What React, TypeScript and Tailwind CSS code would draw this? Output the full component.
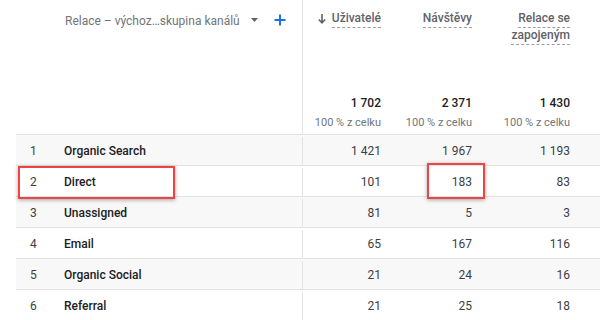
const rows = [
  { n: 1, name: "Organic Search", a: "1 421", b: "1 967", c: "1 193" },
  { n: 2, name: "Direct", a: "101", b: "183", c: "83" },
  { n: 3, name: "Unassigned", a: "81", b: "5", c: "3" },
  { n: 4, name: "Email", a: "65", b: "167", c: "116" },
  { n: 5, name: "Organic Social", a: "21", b: "24", c: "16" },
  { n: 6, name: "Referral", a: "21", b: "25", c: "18" },
];

function HeaderLabel({ children }: { children: React.ReactNode }) {
  return (
    <span className="border-b border-dashed border-[#9aa0a6] pb-[1px] leading-[16px]">
      {children}
    </span>
  );
}

export default function App() {
  return (
    <div
      className="relative h-[320px] w-[600px] overflow-hidden bg-white text-[12px] text-[#3c4043]"
      style={{ fontFamily: "Roboto, 'Liberation Sans', sans-serif" }}
    >
      <div className="ml-[16px]">
        {/* Header */}
        <div className="flex h-[135px] border-b border-[#e3e3e3]">
          <div className="flex w-[287px] items-start border-r border-[#e3e3e3] pt-[12px] pl-[49px]">
            <span className="text-[12px] text-[#70757a]">Relace – výchoz…skupina kanálů</span>
            <svg className="ml-[11px] mt-[6px]" width="7" height="4" viewBox="0 0 7 4">
              <path d="M0 0h7L3.5 4z" fill="#5f6368" />
            </svg>
            <svg className="ml-[16px] mt-[2px]" width="12" height="12" viewBox="0 0 12 12">
              <path d="M6 0.5v11M0.5 6h11" stroke="#1a73e8" strokeWidth="2" />
            </svg>
          </div>
          <div className="flex flex-col">
            <div className="flex h-[94px] items-start pt-[10px] text-[12px] font-medium text-[#5f6368]">
              <div className="flex w-[78px] items-start justify-end">
                <svg className="mr-[6px] mt-[4px]" width="8" height="10" viewBox="0 0 8 10">
                  <path d="M4 0v8.5M0.8 5.5L4 8.8L7.2 5.5" stroke="#5f6368" strokeWidth="1.6" fill="none" />
                </svg>
                <HeaderLabel>Uživatelé</HeaderLabel>
              </div>
              <div className="flex w-[91px] items-start justify-end">
                <HeaderLabel>Návštěvy</HeaderLabel>
              </div>
              <div className="flex w-[98px] flex-col items-end">
                <HeaderLabel>Relace se</HeaderLabel>
                <span className="-mt-[1px] flex">
                  <HeaderLabel>zapojeným</HeaderLabel>
                </span>
              </div>
            </div>
            <div className="flex">
              {[
                ["w-[78px]", "1 702"],
                ["w-[91px]", "2 371"],
                ["w-[98px]", "1 430"],
              ].map(([w, v]) => (
                <div key={v} className={`${w} flex flex-col items-end`}>
                  <span className="font-medium text-[#202124]">{v}</span>
                  <span className="mt-[3px] text-[11px] text-[#70757a]">100 % z celku</span>
                </div>
              ))}
            </div>
          </div>
        </div>

        {/* Rows */}
        {rows.map((r, i) => (
          <div
            key={r.n}
            className={`flex h-[31px] items-center border-b border-[#e3e3e3] pt-[2px] ${
              i % 2 === 0 ? "bg-[#f8f8f8]" : "bg-white"
            }`}
          >
            <div className="flex h-full w-[287px] items-center border-r border-[#e3e3e3]">
              <span className="w-[48px] pl-[14px]">{r.n}</span>
              <span className="font-medium text-[#202124]">{r.name}</span>
            </div>
            <span className="w-[78px] text-right">{r.a}</span>
            <span className="w-[91px] text-right">{r.b}</span>
            <span className="w-[98px] text-right">{r.c}</span>
          </div>
        ))}
      </div>

      {/* Highlight boxes */}
      <div className="absolute left-[18px] top-[166px] h-[33px] w-[157px] border-2 border-[#ef4444] shadow-[0_1px_4px_rgba(0,0,0,0.35)]" />
      <div className="absolute left-[427px] top-[163px] h-[36px] w-[58px] border-2 border-[#ef4444] shadow-[0_1px_4px_rgba(0,0,0,0.35)]" />
    </div>
  );
}
